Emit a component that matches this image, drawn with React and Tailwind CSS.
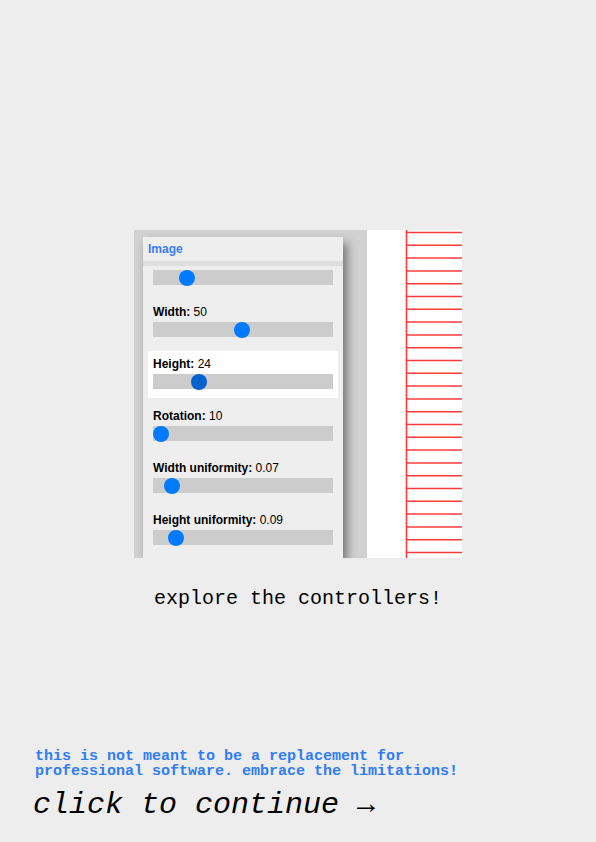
import React from "react";

const rows = [
  { label: null, value: null, left: 26 },
  { label: "Width:", value: "50", left: 81 },
  { label: "Height:", value: "24", left: 38, active: true },
  { label: "Rotation:", value: "10", left: 0 },
  { label: "Width uniformity:", value: "0.07", left: 11 },
  { label: "Height uniformity:", value: "0.09", left: 15 },
];

function Row({ label, value, left, active }) {
  return (
    <div className={`mx-[5px] px-[5px] pt-[7px] pb-[9px] ${active ? "bg-white" : ""}`}>
      <div className="h-[13px] text-[12px] leading-[13px] text-black whitespace-nowrap">
        {label && (
          <>
            <span className="font-bold">{label}</span> {value}
          </>
        )}
      </div>
      <div className="relative mt-[3px] h-[15px] bg-[#cccccc]">
        <div
          className={`absolute top-[-0.5px] h-[16px] w-[16px] rounded-full ${active ? "bg-[#0062d1]" : "bg-[#007bff]"}`}
          style={{ left: `${left}px` }}
        />
      </div>
    </div>
  );
}

function Lines() {
  const ys = Array.from({ length: 26 }, (_, k) => 2.5 + k * 12.8);
  return (
    <svg width="95" height="328" className="block">
      <line x1="39.5" y1="0" x2="39.5" y2="328" stroke="#ff3b3b" strokeWidth="1.6" />
      {ys.map((y, i) => (
        <line key={i} x1="39" y1={y} x2="95" y2={y} stroke="#ff3b3b" strokeWidth="1.5" />
      ))}
    </svg>
  );
}

export default function App() {
  return (
    <div
      className="flex h-[842px] w-[596px] flex-col bg-[#ededed]"
      style={{ fontFamily: '"Liberation Sans", Arial, sans-serif' }}
    >
      <div className="flex justify-center pt-[230px]">
        <div className="flex h-[328px] w-[328px] overflow-hidden">
          <div className="h-full w-[233px] bg-[#d1d1d1] pl-[9px] pt-[7px]">
            <div className="flex h-full w-[200px] flex-col bg-[#eeeeee] shadow-[4px_6px_9px_rgba(0,0,0,0.45)]">
              <div className="flex h-[24px] items-center px-[5px] text-[12px] font-bold text-[#3a7df5]">
                Image
              </div>
              <div className="h-[5px] bg-[#dedede]" />
              <div className="flex-1 overflow-hidden">
                <div className="-mt-[19px] flex flex-col gap-[5px]">
                  {rows.map((r, i) => (
                    <Row key={i} {...r} />
                  ))}
                </div>
              </div>
            </div>
          </div>
          <div className="h-full w-[95px] bg-white">
            <Lines />
          </div>
        </div>
      </div>
      <div
        className="mt-[29px] text-center text-[20px] leading-[24px] text-black"
        style={{ fontFamily: '"Liberation Mono", "DejaVu Sans Mono", monospace' }}
      >
        explore the controllers!
      </div>
      <div
        className="mt-auto pb-[19px] pl-[35px]"
        style={{ fontFamily: '"Liberation Mono", "DejaVu Sans Mono", monospace' }}
      >
        <div className="text-[15px] font-bold leading-[15px] text-[#2f7cf6]">
          <div>this is not meant to be a replacement for</div>
          <div>professional software. embrace the limitations!</div>
        </div>
        <div className="mt-[8px] -ml-[2px] text-[30px] italic leading-[36px] text-black">
          click to continue →
        </div>
      </div>
    </div>
  );
}
